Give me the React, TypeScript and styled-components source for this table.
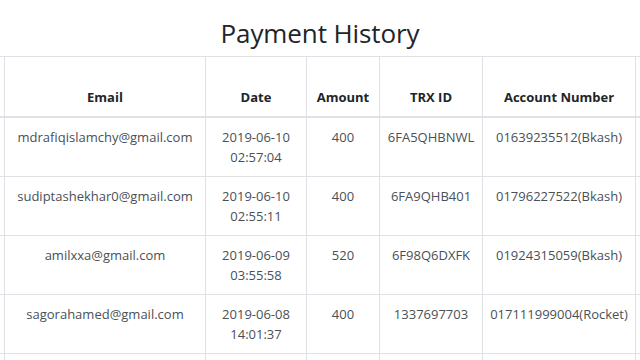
import React from 'react';
import styled, { createGlobalStyle } from 'styled-components';

const GlobalStyle = createGlobalStyle`
  html, body {
    margin: 0;
    padding: 0;
    background: #fff;
    overflow: hidden;
  }
  body {
    font-family: "Open Sans", "Noto Sans", "Liberation Sans", sans-serif;
    font-size: 13px;
    color: #212529;
  }
`;

const Page = styled.div`
  width: 640px;
  height: 360px;
  overflow: hidden;
`;

const Title = styled.h1`
  margin: 0;
  height: 56px;
  padding-top: 18px;
  box-sizing: border-box;
  text-align: center;
  font-size: 26px;
  font-weight: 500;
  line-height: 1.2;
  letter-spacing: -0.1px;
  color: #212529;
`;

const Scroller = styled.div`
  width: 640px;
  overflow: hidden;
`;

const Table = styled.table<{ w: number }>`
  width: ${({ w }) => w}px;
  border-collapse: collapse;
  table-layout: fixed;
  margin-left: -96px;
  color: #495057;
`;

const Th = styled.th<{ w: number }>`
  box-sizing: border-box;
  width: ${({ w }) => w}px;
  height: 60px;
  padding: 9px 6px;
  vertical-align: bottom;
  text-align: center;
  font-weight: 700;
  line-height: 20px;
  color: #212529;
  border: 1px solid #dee2e6;
  border-bottom: 2px solid #dee2e6;
  white-space: nowrap;
`;

const Td = styled.td`
  box-sizing: border-box;
  height: 59px;
  padding: 9px 6px;
  vertical-align: top;
  text-align: center;
  line-height: 20px;
  border: 1px solid #dee2e6;
  white-space: nowrap;
`;

const Line = styled.div``;

type Payment = {
  email: string;
  date: string;
  time: string;
  amount: number;
  trx: string;
  account: string;
};

const payments: Payment[] = [
  { email: 'mdrafiqislamchy@gmail.com', date: '2019-06-10', time: '02:57:04', amount: 400, trx: '6FA5QHBNWL', account: '01639235512(Bkash)' },
  { email: 'sudiptashekhar0@gmail.com', date: '2019-06-10', time: '02:55:11', amount: 400, trx: '6FA9QHB401', account: '01796227522(Bkash)' },
  { email: 'amilxxa@gmail.com', date: '2019-06-09', time: '03:55:58', amount: 520, trx: '6F98Q6DXFK', account: '01924315059(Bkash)' },
  { email: 'sagorahamed@gmail.com', date: '2019-06-08', time: '14:01:37', amount: 400, trx: '1337697703', account: '017111999004(Rocket)' },
];

// first and last columns are scrolled out of view in the reference
const columns = [
  { label: '', w: 100 },
  { label: 'Email', w: 201 },
  { label: 'Date', w: 101 },
  { label: 'Amount', w: 73 },
  { label: 'TRX ID', w: 103 },
  { label: 'Account Number', w: 153 },
  { label: '', w: 80 },
];

const tableWidth = columns.reduce((s, c) => s + c.w, 0);

export default function App() {
  return (
    <Page>
      <GlobalStyle />
      <Title>Payment History</Title>
      <Scroller>
        <Table w={tableWidth}>
          <thead>
            <tr>
              {columns.map((c, i) => (
                <Th key={i} w={c.w}>{c.label}</Th>
              ))}
            </tr>
          </thead>
          <tbody>
            {payments.map((p) => (
              <tr key={p.trx}>
                <Td></Td>
                <Td>{p.email}</Td>
                <Td>
                  <Line>{p.date}</Line>
                  <Line>{p.time}</Line>
                </Td>
                <Td>{p.amount}</Td>
                <Td>{p.trx}</Td>
                <Td>{p.account}</Td>
                <Td></Td>
              </tr>
            ))}
            <tr>
              <Td></Td>
              <Td></Td>
              <Td></Td>
              <Td></Td>
              <Td></Td>
              <Td></Td>
              <Td></Td>
            </tr>
          </tbody>
        </Table>
      </Scroller>
    </Page>
  );
}
